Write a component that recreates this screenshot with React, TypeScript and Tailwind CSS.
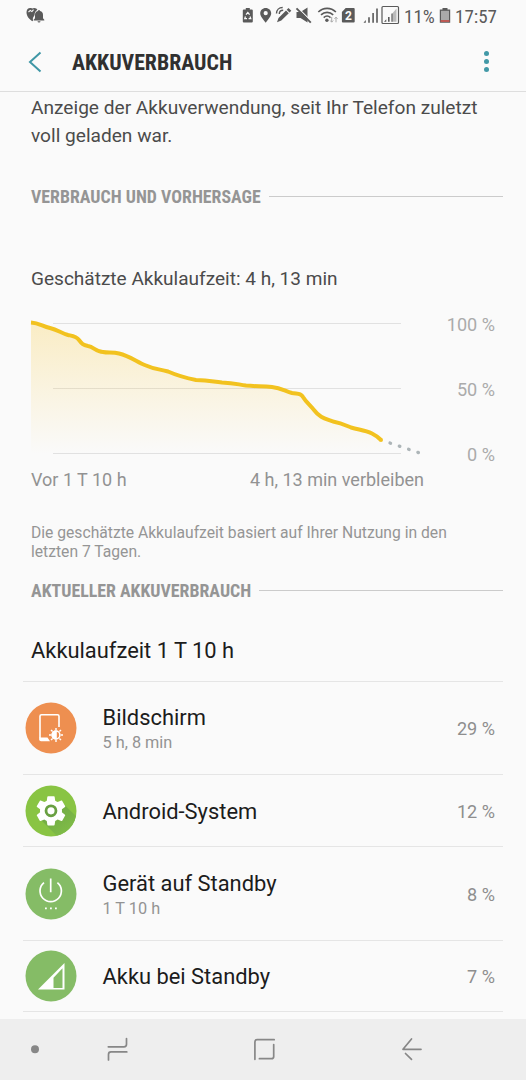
import * as React from 'react';

const CONDENSED = "font-['Roboto_Condensed','Roboto',sans-serif] [font-stretch:75%]";

type Usage = {
  id: string;
  name: string;
  detail?: string;
  percent: string;
  height: string;
  icon: React.ReactNode;
};

function StatusBar() {
  return (
    <div className="flex h-8 items-start justify-between pl-[26px] pr-[30px] text-[#5a5a5a]">
      <svg width="20" height="32" viewBox="26 0 20 32" fill="currentColor">
        <path d="M26.500 12.300c0-3.500 2.800-5 5.600-3.800 2-1.200 4.900-.4 5.300 1.400-2 .6-2.800 3-2.800 5l-1.700 3v3.400C29.500 20 26.500 16.200 26.500 12.300z" />
        <path d="M28.500 12l1.800-1.600 1.600 1.200 1.600-2" stroke="#fafafa" strokeWidth="1.100" fill="none" />
        <path d="M39 10a1 1 0 0 1 1 1c2.200.6 3 2 3 4v3.300l1.300 1.400v.9H33.700v-.9l1.300-1.400V15c0-2 .8-3.400 3-4a1 1 0 0 1 1-1z" />
        <path d="M37.500 21.200h3a1.500 1.300 0 0 1-3 0z" />
      </svg>
      <div className="flex h-8">
        <svg width="162" height="32" viewBox="240 0 162 32" fill="currentColor">
          {/* battery saver */}
          <path d="M245.800 8h4v1.600h2a1 1 0 0 1 1 1V21.500a1 1 0 0 1-1 1h-8a1 1 0 0 1-1-1V10.600a1 1 0 0 1 1-1h2z" />
          <path d="M246 14.700l1.800-2.200 1.800 2.200M250 16.500l.8 2.200h-2.200M247 18.700h-2.300l.8-2.200" stroke="#fafafa" strokeWidth="1.200" fill="none" />
          {/* location */}
          <path fillRule="evenodd" d="M265.700 8c3.100 0 5.500 2.300 5.500 5.200 0 3.300-3 5.800-5.500 9.500-2.500-3.700-5.500-6.200-5.500-9.500 0-2.900 2.400-5.200 5.500-5.200zm0 3.100a2.100 2.100 0 1 0 0 4.200 2.100 2.100 0 0 0 0-4.200z" />
          {/* air command pen */}
          <path d="M288.500 8l2.800 2.800-1.800 1.800-2.800-2.800zM286 10.500l2.800 2.800-7.500 7.200-4.300 1.700 1.500-4.300z" />
          <path d="M276.500 13.500c0-3.500 2.500-6 6.200-6M279.300 14c0-2.200 1.500-3.700 3.900-3.700" stroke="currentColor" strokeWidth="1.400" fill="none" />
          {/* muted */}
          <path d="M296.500 12h4l7-4.500v15l-7-4.500h-4z" />
          <path d="M297.500 7.300l15 15" stroke="#fafafa" strokeWidth="1.200" />
          <path d="M296.500 8.300l14.300 14.300" stroke="currentColor" strokeWidth="1.900" />
          {/* wifi */}
          <g fill="none" stroke="currentColor" strokeWidth="1.600">
            <path d="M318.300 12c5-4.800 12.600-4.800 17.600 0" />
            <path d="M321 14.800c3.500-3.300 8.700-3.300 12.200 0" />
            <path d="M323.700 17.600c2-1.900 4.800-1.900 6.800 0" />
          </g>
          <circle cx="326.900" cy="20.300" r="1.700" />
          <path d="M331.700 17v5M330.200 20.500l1.500 1.700 1.500-1.700M336 22.300v-5M334.500 18.800l1.500-1.700 1.500 1.700" stroke="#aaa" strokeWidth="1" fill="none" />
          {/* sim */}
          <path d="M345.700 8h8a1 1 0 0 1 1 1v12.500a1 1 0 0 1-1 1h-10.800a1 1 0 0 1-1-1V12z" />
          <text x="348.400" y="19.800" textAnchor="middle" fontSize="12" fontWeight="700" fill="#fafafa" fontFamily="Roboto, sans-serif">2</text>
          {/* signal 1 */}
          <path d="M363.500 22.800l2.300-2.800v2.800zM368.200 17.200h1.600v5.600h-1.600zM372.300 13h1.600v9.800h-1.600zM376.200 8.500h1.600v14.300h-1.600z" />
          {/* signal 2 */}
          <rect x="382" y="6.500" width="16.500" height="17" rx="1" fill="none" stroke="currentColor" strokeWidth="1.200" />
          <path d="M384 21.800l2.300-2.500v2.500zM388 17h1.600v4.800H388z" />
          <path d="M391.500 14.500l5-6v13.300h-5z" fill="#bbb" />
          <path d="M391.500 13.500h1v8.300h-1z" />
        </svg>
        <span className={`${CONDENSED} ml-[2px] w-[30px] whitespace-nowrap text-[19px] leading-[33px]`}>11%</span>
        <svg className="ml-[5px]" width="12" height="32" viewBox="439 0 12 32">
          <path d="M442.500 8h5v1.500h2.700v13.300h-10.400V9.500h2.700z" fill="#5a5a5a" />
          <path d="M441 10.800h8V20h-8z" fill="#aaa" />
          <path d="M440.600 20h8.800v2h-8.800z" fill="#bd5a55" />
        </svg>
        <span className={`${CONDENSED} ml-[4px] w-[41px] whitespace-nowrap text-[19px] leading-[33px]`}>17:57</span>
      </div>
    </div>
  );
}

function Header() {
  return (
    <header className="flex h-[60px] items-center border-b border-[#dedede] pl-[28px] pr-[37px]">
      <svg width="14" height="22" viewBox="0 0 14 22" fill="none" stroke="#3f97a6" strokeWidth="2">
        <path d="M12.500 1.500L2 11l10.500 9.500" />
      </svg>
      <h1 className={`${CONDENSED} ml-[30px] mt-[3px] flex-1 text-[21.800px] font-bold text-[#303030]`}>AKKUVERBRAUCH</h1>
      <div className="flex flex-col gap-[3px]">
        <i className="size-[5px] rounded-full bg-[#4299a7]" />
        <i className="size-[5px] rounded-full bg-[#4299a7]" />
        <i className="size-[5px] rounded-full bg-[#4299a7]" />
      </div>
    </header>
  );
}

function SectionTitle({ children }: { children: React.ReactNode }) {
  return (
    <div className="flex h-[22px] items-center gap-2 pl-[31px] pr-[23px]">
      <h2 className={`${CONDENSED} text-[17.850px] font-bold leading-[22px] text-[#959595]`}>{children}</h2>
      <div className="mb-[2px] h-px flex-1 bg-[#cbcbcb]" />
    </div>
  );
}

function BatteryChart() {
  const curve =
    'M31 322.500C39 323 42 326 50 328S61 333 68 335C73 336 76 336 79 340S83 345 88 346C94 347 96 352 103 352C108 353 113 352 119 353.500C130 356 137 362 146 365.500C156 370 160 369 168 371.500C176 375 186 378 196 380C210 380.500 212 381.500 222 382.500C235 383 238 384.500 246 385.500C256 386.500 262 386 272 387C281 388 285 391 292 393C298 394 301 393 303 397C306 402 309 404 314 410C320 418 325 418.500 333 421.500C341 423 345 425 351 427.500C360 430 365 430 372 433.500C376 435.500 378 437 381 440';
  return (
    <div className="flex h-[148px] justify-between pl-[30px] pr-[31px]">
      <svg width="396" height="148" viewBox="30 314 396 148" fill="none">
        <defs>
          <linearGradient id="fade" x1="0" y1="322" x2="0" y2="454" gradientUnits="userSpaceOnUse">
            <stop offset="0" stopColor="#f9c834" stopOpacity=".27" />
            <stop offset="1" stopColor="#f9c834" stopOpacity="0" />
          </linearGradient>
        </defs>
        <path d="M53 323.500h348M53 388.500h348M53 453.500h348" stroke="#e1e1e1" />
        <path d={`${curve}V454H31Z`} fill="url(#fade)" />
        <path d={curve} stroke="#f2c21f" strokeWidth="4" />
        <circle cx="381" cy="440" r="2" fill="#f2c21f" />
        <path d="M390 443l28.500 9.600" stroke="#adb5b8" strokeWidth="3.300" strokeLinecap="round" strokeDasharray=".6 9.200" />
      </svg>
      <div className="-mb-[3px] flex flex-col justify-between text-right text-[18.100px] leading-[21px] text-[#ababab]">
        <span>100 %</span>
        <span>50 %</span>
        <span>0 %</span>
      </div>
    </div>
  );
}

const USAGE: Usage[] = [
  {
    id: 'screen',
    name: 'Bildschirm',
    detail: '5 h, 8 min',
    percent: '29 %',
    height: 'h-[93.500px]',
    icon: (
      <svg width="52" height="52" viewBox="0 0 52 52" fill="none" stroke="#fff" strokeWidth="1.600">
        <circle cx="26" cy="26" r="25.500" fill="#ee8f50" stroke="none" />
        <path d="M34 25V14.300a1.500 1.500 0 0 0-1.500-1.500h-16a1.500 1.500 0 0 0-1.500 1.500v22" />
        <path d="M14.200 35.500h8.300l2.500 3.700h-9a1.800 1.800 0 0 1-1.800-1.800z" fill="#fff" stroke="none" />
        <circle cx="31" cy="33" r="3.900" strokeWidth="1.500" />
        <path d="M31 29.300a3.700 3.700 0 0 0 0 7.400z" fill="#fff" />
        <path d="M31 26v2.200M31 37.800v2.200M24 33h2.200M35.800 33h2.200M26 28l1.600 1.600M34.400 36.400l1.600 1.600M36 28l-1.600 1.600M27.600 36.400l-1.600 1.600" strokeWidth="1.400" />
      </svg>
    ),
  },
  {
    id: 'system',
    name: 'Android-System',
    percent: '12 %',
    height: 'h-[72px]',
    icon: (
      <svg width="52" height="52" viewBox="0 0 52 52">
        <defs>
          <clipPath id="disc">
            <circle cx="26" cy="26" r="25.500" />
          </clipPath>
          <linearGradient id="gearShadow" x1="26" y1="20" x2="44" y2="46" gradientUnits="userSpaceOnUse">
            <stop offset="0" stopColor="#6fa745" />
            <stop offset="1" stopColor="#7fbc47" />
          </linearGradient>
        </defs>
        <circle cx="26" cy="26" r="25.500" fill="#89c443" />
        <path clipPath="url(#disc)" d="M15 34l18 18h19V32L38.500 19z" fill="url(#gearShadow)" />
        <g transform="translate(8.400 8.200) scale(1.466)">
          <path
            fill="#fff"
            d="M19.430 12.980c.04-.32.07-.64.07-.98s-.03-.66-.07-.98l2.110-1.650c.19-.15.24-.42.12-.64l-2-3.460c-.12-.22-.39-.3-.61-.22l-2.490 1c-.52-.4-1.080-.73-1.690-.98l-.38-2.650A.488.488 0 0 0 14 2h-4c-.25 0-.46.18-.49.42l-.38 2.650c-.61.25-1.170.59-1.690.98l-2.490-1c-.23-.09-.49 0-.61.22l-2 3.460c-.13.22-.07.49.12.64l2.110 1.650c-.04.32-.07.65-.07.98s.03.66.07.98l-2.110 1.650c-.19.15-.24.42-.12.64l2 3.460c.12.22.39.3.61.22l2.490-1c.52.4 1.080.73 1.690.98l.38 2.650c.03.24.24.42.49.42h4c.25 0 .46-.18.49-.42l.38-2.650c.61-.25 1.170-.59 1.690-.98l2.490 1c.23.09.49 0 .61-.22l2-3.460c.12-.22.07-.49-.12-.64z"
          />
          <circle cx="12" cy="12" r="3.400" fill="#fff" stroke="#69a042" strokeWidth="1.900" />
        </g>
      </svg>
    ),
  },
  {
    id: 'idle',
    name: 'Gerät auf Standby',
    detail: '1 T 10 h',
    percent: '8 %',
    height: 'h-[94px]',
    icon: (
      <svg width="52" height="52" viewBox="0 0 52 52" fill="none" stroke="#fff" strokeWidth="1.700">
        <circle cx="26" cy="26" r="25.500" fill="#85bc66" stroke="none" />
        <path d="M25.700 10.500v13.800M19 14.600a10.700 10.700 0 1 0 13.400 0" />
        <path d="M20 40.300h1.800M25 40.300h1.800M30 40.300h1.800" />
      </svg>
    ),
  },
  {
    id: 'cell',
    name: 'Akku bei Standby',
    percent: '7 %',
    height: 'h-[71px]',
    icon: (
      <svg width="52" height="52" viewBox="0 0 52 52">
        <circle cx="26" cy="26" r="25.500" fill="#85bc66" />
        <path fillRule="evenodd" d="M13 39.500L39.500 13v26.500zM28.500 27.700v10.300H37.500V18.300z" fill="#fff" />
      </svg>
    ),
  },
];

function UsageRow({ item }: { item: Usage }) {
  return (
    <li className={`${item.height} flex items-center border-t border-[#e5e5e5] pl-[2px] pr-2`}>
      {item.icon}
      <div className="ml-[25.500px] flex-1 pt-[2px]">
        <div className="text-[21.900px] leading-[26px] text-[#1c1c1c]">{item.name}</div>
        {item.detail && <div className="mt-[2px] text-[16.300px] leading-[20px] text-[#939393]">{item.detail}</div>}
      </div>
      <span className="pt-[2px] text-[18.100px] text-[#8e8e8e]">{item.percent}</span>
    </li>
  );
}

function NavBar() {
  return (
    <nav className="h-[61px] bg-[#eeeeee]">
      <svg width="526" height="61" viewBox="0 1019 526 61" fill="none" stroke="#878787" strokeWidth="1.700" strokeLinecap="round" strokeLinejoin="round">
        <circle cx="35" cy="1049.300" r="4" fill="#878787" stroke="none" />
        <path d="M108.300 1046.800H124q2.500 0 2.500-2.500V1038.500M126.800 1051.900H111q-2.500 0-2.500 2.500V1060" />
        <path d="M254.200 1059.300V1042q0-2.300 2.300-2.300H273.500M273 1044.500V1056.400q0 2.300-2.300 2.300H258.700" transform="translate(.7)" />
        <path d="M419.500 1049.300H401.500L410 1039M404 1053.500L410 1059.300" transform="translate(1.500)" />
      </svg>
    </nav>
  );
}

export default function App() {
  return (
    <div className="flex h-[1080px] w-[526px] flex-col overflow-hidden bg-[#fafafa] font-['Roboto',sans-serif]">
      <StatusBar />
      <Header />
      <main className="flex-1">
        <p className="px-[31px] pt-[2px] text-[19.125px] leading-[27.500px] text-[#4b4b4b]">
          Anzeige der Akkuverwendung, seit Ihr Telefon zuletzt voll geladen war.
        </p>
        <section className="pt-[37px]">
          <SectionTitle>VERBRAUCH UND VORHERSAGE</SectionTitle>
          <p className="mb-[22px] mt-[57px] px-[31px] text-[19.050px] leading-[27px] text-[#4b4b4b]">
            Geschätzte Akkulaufzeit: 4 h, 13 min
          </p>
          <BatteryChart />
          <div className="mt-[7px] flex justify-between pl-[31px] pr-[102px] text-[18px] leading-[22px] text-[#929292]">
            <span>Vor 1 T 10 h</span>
            <span>4 h, 13 min verbleiben</span>
          </div>
          <p className="mt-[33px] pl-[31px] pr-[60px] text-[15.660px] leading-[18.500px] text-[#959595]">
            Die geschätzte Akkulaufzeit basiert auf Ihrer Nutzung in den letzten 7 Tagen.
          </p>
        </section>
        <section className="pt-[19px]">
          <SectionTitle>AKTUELLER AKKUVERBRAUCH</SectionTitle>
          <h3 className="mb-[16.500px] mt-[35px] px-[31px] text-[21.900px] leading-[27px] text-[#1c1c1c]">Akkulaufzeit 1 T 10 h</h3>
          <ul className="mx-[23px] border-b border-[#e5e5e5]">
            {USAGE.map((item) => (
              <UsageRow key={item.id} item={item} />
            ))}
          </ul>
        </section>
      </main>
      <NavBar />
    </div>
  );
}
